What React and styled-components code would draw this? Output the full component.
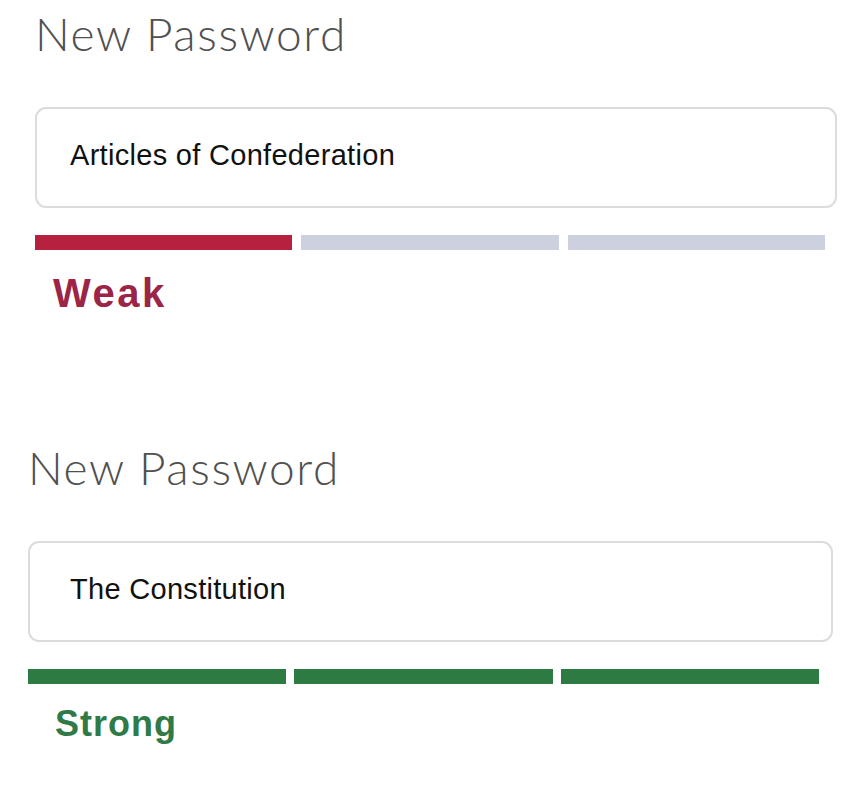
import React from 'react';
import styled, {createGlobalStyle} from 'styled-components';

const GlobalStyle = createGlobalStyle`
    html, body {
        margin: 0;
        padding: 0;
        background: #ffffff;
    }
`;

const tones = {
    weak: {bar: '#b5213f', text: '#9b2447'},
    strong: {bar: '#2d7a43', text: '#2f7a47'},
};

const Page = styled.div`
    width: 861px;
    height: 787px;
    display: flex;
    flex-direction: column;
    padding-top: 11px;
    box-sizing: border-box;
    font-family: "Liberation Sans", Arial, sans-serif;
`;

const Field = styled.section`
    display: flex;
    flex-direction: column;
    padding-left: ${p => p.$inset}px;
    margin-top: ${p => p.$top}px;
`;

const Label = styled.label`
    font-family: Lato, "Open Sans", sans-serif;
    font-weight: 300;
    font-size: 46px;
    line-height: 1;
    color: #505050;
    letter-spacing: 1.6px;
`;

const Input = styled.input`
    box-sizing: border-box;
    margin-top: 50px;
    width: ${p => p.$width}px;
    height: 101px;
    padding: 0 0 5px ${p => p.$pad}px;
    border: 2px solid #dcdcdc;
    border-radius: 11px;
    background: #ffffff;
    font-family: "Liberation Sans", Arial, sans-serif;
    font-size: 29px;
    letter-spacing: 0.3px;
    color: #111111;
    outline: none;
`;

const Meter = styled.div`
    display: grid;
    grid-template-columns: repeat(3, 1fr);
    gap: ${p => p.$gap}px;
    width: ${p => p.$width}px;
    margin-top: 27px;
`;

const Segment = styled.div`
    height: 15px;
    background: ${p => (p.$on ? tones[p.$tone].bar : '#cdd0de')};
`;

const Strength = styled.div`
    margin-top: ${p => p.$top}px;
    padding-left: ${p => p.$indent}px;
    font-weight: 700;
    font-size: ${p => p.$size}px;
    letter-spacing: ${p => p.$spacing}px;
    line-height: 1;
    color: ${p => tones[p.$tone].text};
`;

const PasswordField = ({value, tone, filled, inset, top, inputWidth, pad, meterWidth, gap, word, size, spacing, wordTop, indent}) => (
    <Field $inset={inset} $top={top}>
        <Label>New Password</Label>
        <Input type="text" readOnly value={value} $width={inputWidth} $pad={pad} />
        <Meter $width={meterWidth} $gap={gap}>
            {[0, 1, 2].map(i => (
                <Segment key={i} $on={i < filled} $tone={tone} />
            ))}
        </Meter>
        <Strength $tone={tone} $size={size} $spacing={spacing} $top={wordTop} $indent={indent}>
            {word}
        </Strength>
    </Field>
);

const App = () => (
    <Page>
        <GlobalStyle />
        <PasswordField
            value="Articles of Confederation"
            tone="weak"
            filled={1}
            inset={35}
            top={0}
            inputWidth={802}
            pad={33}
            meterWidth={790}
            gap={9}
            word="Weak"
            size={40}
            spacing={2.5}
            wordTop={23}
            indent={18}
        />
        <PasswordField
            value="The Constitution"
            tone="strong"
            filled={3}
            inset={28}
            top={132}
            inputWidth={805}
            pad={40}
            meterWidth={791}
            gap={8}
            word="Strong"
            size={36}
            spacing={1}
            wordTop={22}
            indent={27}
        />
    </Page>
);

export default App;
